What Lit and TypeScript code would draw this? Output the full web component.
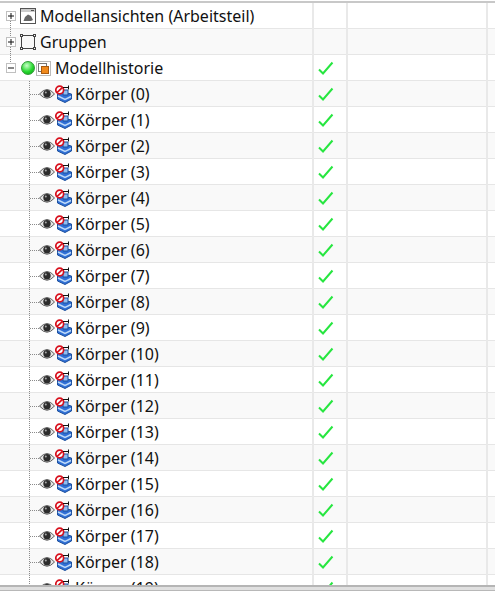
import { LitElement, html, css } from "lit";
import { customElement } from "lit/decorators.js";

const check = html`<svg class="chk" width="16" height="16" viewBox="0 0 16 16"><path d="M1 9.5 L5 13.5 L14.5 2.5" fill="none" stroke="#27e640" stroke-width="2"/></svg>`;

const eye = html`<svg class="ic" width="16" height="16" viewBox="0 0 16 16"><path d="M.5 8 Q8 -1 15.5 8 Q8 16.5 .5 8Z" fill="#e4e4e4" stroke="#5f5f5f" stroke-width="1"/><circle cx="8" cy="7.8" r="3.7" fill="#2c2c2c"/><circle cx="6.8" cy="6.6" r="1" fill="#a8a8a8"/></svg>`;

const body = html`<svg class="ic" width="17" height="18" viewBox="0 0 17 18">
  <path d="M2.5 9 L7 6 L12 8 L16.5 9 L16.5 14 L10 17.5 L2.5 14Z" fill="#2f6fd6" stroke="#1c4f9c" stroke-width="1"/>
  <path d="M3 11 L10 14.5 L16 11.5" fill="none" stroke="#bcd8f8" stroke-width="1.5"/>
  <path d="M8 5 L13 5 L13 10 L8 10Z" fill="#8fbdf0" stroke="#1c4f9c" stroke-width="1"/>
  <circle cx="4.7" cy="5" r="3.9" fill="#fff" stroke="#d8101c" stroke-width="1.7"/>
  <path d="M2 7.7 L7.5 2.3" stroke="#d8101c" stroke-width="1.7"/>
  <path d="M8 2.5 H13.5 M13.5 .5 V4.5" stroke="#111" stroke-width="1" fill="none"/>
</svg>`;

const expander = (open: boolean) => html`<svg class="exp" width="10" height="10" viewBox="0 0 10 10"><rect x=".5" y=".5" width="9" height="9" fill="#fff" stroke="#c0c0c0"/><path d="${open ? "M2 5H8" : "M2 5H8M5 2V8"}" stroke="#111" fill="none"/></svg>`;

@customElement("app-root")
export class AppRoot extends LitElement {
  static styles = css`
    :host { display: block; width: 495px; height: 591px; overflow: hidden; background: #fff; font-family: "Noto Sans", "Open Sans", sans-serif; position: relative; }
    .top { height: 3px; box-sizing: border-box; background: #fff; border-bottom: 2px solid #c8c8c8; }
    .tree { height: 582px; overflow: hidden; }
    .row { display: grid; grid-template-columns: 314px 34px 140px 7px; height: 26px; box-sizing: border-box; border-bottom: 1px solid #e6e6e6; }
    .row.alt { background: #f9f9f9; }
    .cell { border-right: 2px solid #e9e9e9; box-sizing: border-box; display: flex; align-items: center; min-width: 0; }
    .name { position: relative; padding-left: 6px; font-size: 16px; color: #111; white-space: nowrap; }
    .mark { padding-left: 4px; }
    .chk { flex: none; display: block; }
    .ic { flex: none; display: block; }
    .exp { flex: none; display: block; position: relative; }
    .label { line-height: 25px; padding-top: 1px; }
    .dots-v { position: absolute; left: 29px; top: 0; bottom: -1px; border-left: 1px dotted #8a8a8a; }
    .dots-h { width: 9px; flex: none; border-top: 1px dotted #8a8a8a; }
    .dots-first { position: absolute; left: 10px; top: 0; bottom: -1px; border-left: 1px dotted #8a8a8a; }
    .bottom { height: 6px; box-sizing: border-box; background: #e0e0e0; border-top: 2px solid #b5b5b5; border-bottom: 1px solid #b8b8b8; }
    .gap4 { width: 4px; flex: none; }
    .gap1 { width: 1px; flex: none; }
    .gap3 { width: 3px; flex: none; }
    .spacer { width: 24px; flex: none; }
    .ball { width: 14px; height: 14px; border-radius: 50%; flex: none; margin-left: 1px; background: radial-gradient(circle at 40% 30%, #c9ffc9, #27d82f 55%, #0a9a12); border: 1px solid #2f9a34; box-sizing: border-box; }
  `;

  private top(icon: unknown, text: string, open: boolean, alt: boolean, first: boolean) {
    return html`<div class="row ${alt ? "alt" : ""}">
      <div class="cell name">
        <span class="dots-first" style="${first ? "top:18px" : open ? "bottom:17px" : ""}"></span>
        ${expander(open)}<span class="gap4"></span>${icon}<span class="gap4"></span><span class="label">${text}</span>
      </div>
      <div class="cell mark">${open ? check : ""}</div>
      <div class="cell"></div>
      <div></div>
    </div>`;
  }

  private child(i: number) {
    return html`<div class="row ${i % 2 === 0 ? "alt" : ""}">
      <div class="cell name">
        <span class="dots-v"></span>
        <span class="spacer"></span><span class="dots-h"></span>${eye}${body}<span class="gap3"></span><span class="label">Körper (${i})</span>
      </div>
      <div class="cell mark">${check}</div>
      <div class="cell"></div>
      <div></div>
    </div>`;
  }

  render() {
    const views = html`<svg class="ic" width="16" height="16" viewBox="0 0 16 16"><rect x=".5" y=".5" width="15" height="15" fill="#fff" stroke="#555"/><rect x="1" y="1" width="14" height="3" fill="#ccc"/><path d="M11 2.5h3" stroke="#555"/><path d="M3.5 13 L5 9 L8 6.5 L11 8 L13 12 L11 13Z" fill="#666"/></svg>`;
    const group = html`<svg class="ic" width="16" height="16" viewBox="0 0 16 16"><rect x="1.5" y="1.5" width="13" height="13" fill="none" stroke="#444"/><g fill="#fff" stroke="#444"><rect x=".5" y=".5" width="2" height="2"/><rect x="13.5" y=".5" width="2" height="2"/><rect x=".5" y="13.5" width="2" height="2"/><rect x="13.5" y="13.5" width="2" height="2"/></g></svg>`;
    const hist = html`<span class="ball"></span><span class="gap1"></span><svg class="ic" width="15" height="15" viewBox="0 0 15 15"><rect x=".5" y=".5" width="14" height="14" fill="#fff" stroke="#bbb"/><rect x="2.5" y="2.5" width="8" height="8" fill="#fff" stroke="#777"/><rect x="5.5" y="5.5" width="7" height="7" fill="#f08a1c" stroke="#a85a10"/></svg>`;
    return html`
      <div class="top"></div>
      <div class="tree">
        ${this.top(views, "Modellansichten (Arbeitsteil)", false, false, true)}
        ${this.top(group, "Gruppen", false, true, false)}
        ${this.top(hist, "Modellhistorie", true, false, false)}
        ${Array.from({ length: 20 }, (_, i) => this.child(i))}
      </div>
      <div class="bottom"></div>
    `;
  }
}
